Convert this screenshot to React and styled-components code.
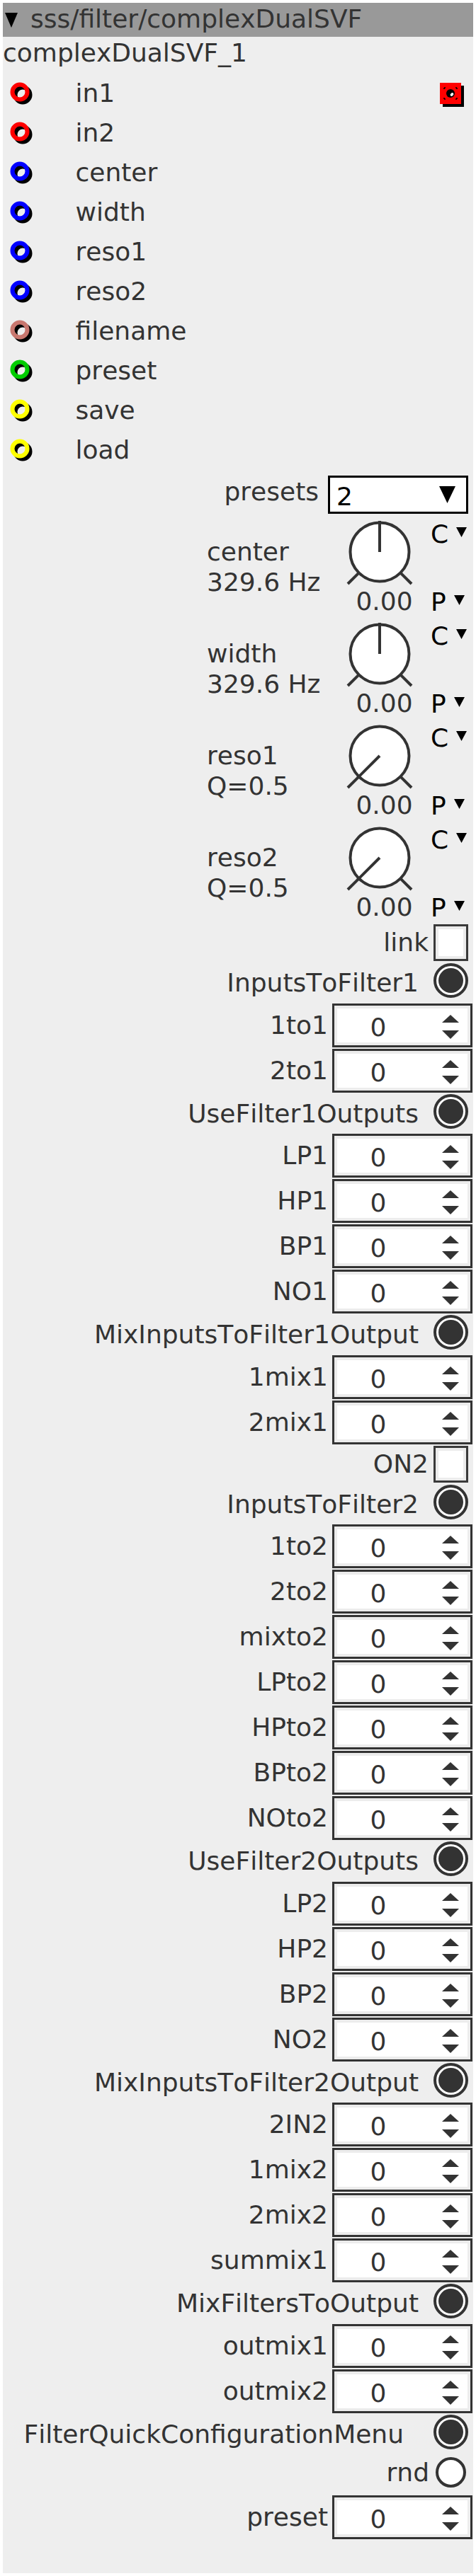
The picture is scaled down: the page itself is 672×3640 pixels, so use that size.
import React from "react";
import styled, { createGlobalStyle } from "styled-components";

const Global = createGlobalStyle`
  html, body { padding: 0; background: #ffffff; }
  body { margin: 4px; font-family: "DejaVu Sans", "Liberation Sans", sans-serif; }
  * { box-sizing: border-box; }
`;

const Panel = styled.div`
  background: #eeeeee;
  min-height: 3632px;
  color: #333333;
  font-size: 36px;
  font-family: "DejaVu Sans", "Liberation Sans", sans-serif;
  font-kerning: none;
  font-feature-settings: "kern" 0;
`;

const Header = styled.div`
  height: 48px;
  background: #999999;
  display: flex;
  align-items: flex-start;
  padding-left: 3px;
`;

const HeaderArrow = styled.svg`
  margin-top: 14px;
  flex: none;
`;

const HeaderTitle = styled.div`
  margin-left: 18px;
  line-height: 46px;
  color: #333333;
  white-space: nowrap;
`;

const TitleRow = styled.div`
  height: 52px;
  line-height: 46px;
  white-space: nowrap;
`;

const InletRow = styled.div`
  height: 56px;
  display: flex;
  align-items: flex-start;
  padding-left: 9.5px;
  padding-right: 13px;
`;

const InletIcon = styled.svg`
  margin-top: 12px;
  flex: none;
`;

const InletLabel = styled.div`
  margin-left: 61px;
  line-height: 56px;
  white-space: nowrap;
`;

const OutletBox = styled.svg`
  margin-left: auto;
  margin-top: 13px;
  flex: none;
`;

const PresetsRow = styled.div`
  height: 66px;
  display: flex;
  justify-content: flex-end;
  align-items: flex-start;
  padding-right: 7px;
`;

const PresetsLabel = styled.div`
  margin-top: 4px;
  margin-right: 13px;
  line-height: 54px;
`;

const DropBox = styled.div`
  margin-top: 8px;
  width: 198px;
  height: 54px;
  border: 3px solid #000000;
  background: #ffffff;
  display: flex;
  align-items: center;
  padding-left: 9px;
  padding-right: 15px;
`;

const DropText = styled.div`
  align-self: flex-start;
  margin-top: 6px;
  line-height: 41px;
  color: #000000;
  flex: 1;
`;

const KnobBlock = styled.div`
  height: 144px;
  display: flex;
  justify-content: flex-end;
`;

const KnobLabel = styled.div`
  width: 194px;
  padding-top: 28px;
  line-height: 43px;
  white-space: nowrap;
`;

const KnobCol = styled.div`
  width: 100px;
  display: flex;
  flex-direction: column;
`;

const KnobValue = styled.div`
  line-height: 40px;
  text-align: center;
  padding-left: 13px;
  white-space: nowrap;
`;

const SideCol = styled.div`
  width: 82px;
  height: 144px;
  padding: 4.5px 0 3.5px 22px;
  display: flex;
  flex-direction: column;
  justify-content: space-between;
  color: #000000;
`;

const SideItem = styled.div`
  display: flex;
  align-items: flex-start;
  line-height: 40px;
`;

const SmallTri = styled.svg`
  margin-left: 11px;
  margin-top: 10px;
  flex: none;
`;

const Row = styled.div`
  height: ${(p) => p.$h}px;
  display: flex;
  justify-content: flex-end;
  align-items: flex-start;
  padding-right: ${(p) => p.$pr}px;
`;

const Label = styled.div`
  white-space: nowrap;
  line-height: ${(p) => p.$lh}px;
  padding-top: ${(p) => p.$pt || 0}px;
  margin-top: ${(p) => p.$mt || 0}px;
  margin-right: ${(p) => p.$mr}px;
`;

const SpinBox = styled.div`
  width: 198px;
  height: 62px;
  border: 3px solid #333333;
  background: #ffffff;
  box-shadow: inset 0 0 0 4px #ececec;
  display: flex;
  align-items: flex-start;
`;

const SpinValue = styled.div`
  width: 124px;
  text-align: center;
  line-height: 50px;
  padding-top: 6px;
  color: #333333;
`;

const SpinArrows = styled.svg`
  margin-left: 28px;
  margin-top: 13px;
  flex: none;
`;

const RadioOuter = styled.div`
  width: 49px;
  height: 49px;
  border-radius: 50%;
  border: 4px solid #333333;
  background: #ffffff;
  display: flex;
  align-items: center;
  justify-content: center;
  flex: none;
`;

const RadioDot = styled.div`
  width: 35px;
  height: 35px;
  border-radius: 50%;
  background: #333333;
`;

const ToggleCircle = styled.div`
  width: 43px;
  height: 43px;
  border-radius: 50%;
  border: 4px solid #333333;
  background: #ffffff;
  margin-top: 3.5px;
  flex: none;
`;

const CheckBox = styled.div`
  width: 49px;
  height: 52px;
  border: 3px solid #3a3a3a;
  background: #ffffff;
  box-shadow: inset 0 0 0 4px #ececec;
  flex: none;
`;

const inlets = [
  { name: "in1", color: "#ff0000", outlet: true },
  { name: "in2", color: "#ff0000" },
  { name: "center", color: "#0000ff" },
  { name: "width", color: "#0000ff" },
  { name: "reso1", color: "#0000ff" },
  { name: "reso2", color: "#0000ff" },
  { name: "filename", color: "#c8776f" },
  { name: "preset", color: "#00cc00" },
  { name: "save", color: "#ffff00" },
  { name: "load", color: "#ffff00" },
];

const knobs = [
  { name: "center", value: "329.6 Hz", angle: 0 },
  { name: "width", value: "329.6 Hz", angle: 0 },
  { name: "reso1", value: "Q=0.5", angle: -135 },
  { name: "reso2", value: "Q=0.5", angle: -135 },
];

const S = (label) => ({ t: "spin", label });
const R = (label, gap) => ({ t: "radio", label, gap });

const controls = [
  { t: "check", label: "link" },
  R("InputsToFilter1"),
  S("1to1"),
  S("2to1"),
  R("UseFilter1Outputs"),
  S("LP1"),
  S("HP1"),
  S("BP1"),
  S("NO1"),
  R("MixInputsToFilter1Output"),
  S("1mix1"),
  S("2mix1"),
  { t: "check", label: "ON2" },
  R("InputsToFilter2"),
  S("1to2"),
  S("2to2"),
  S("mixto2"),
  S("LPto2"),
  S("HPto2"),
  S("BPto2"),
  S("NOto2"),
  R("UseFilter2Outputs"),
  S("LP2"),
  S("HP2"),
  S("BP2"),
  S("NO2"),
  R("MixInputsToFilter2Output"),
  S("2IN2"),
  S("1mix2"),
  S("2mix2"),
  S("summix1"),
  R("MixFiltersToOutput"),
  S("outmix1"),
  S("outmix2"),
  R("FilterQuickConfigurationMenu", 42),
  { t: "toggle", label: "rnd" },
  S("preset"),
];

function InletRing({ color }) {
  return (
    <InletIcon width="32" height="32" viewBox="0 0 32 32">
      <circle cx="18" cy="18" r="10.5" fill="none" stroke="#000" strokeWidth="6" />
      <circle cx="14" cy="14" r="10.5" fill="none" stroke={color} strokeWidth="6" />
    </InletIcon>
  );
}

function Outlet() {
  return (
    <OutletBox width="34" height="34" viewBox="0 0 34 34">
      <rect x="4" y="4" width="30" height="30" fill="#000" />
      <rect x="0" y="0" width="30" height="30" fill="#ff0000" />
      <path d="M6 7h2M6 7v2M22 7h2M24 7v2M6 23h2M6 21v2M22 23h2M24 21v2" stroke="#000" strokeWidth="1.5" fill="none" />
      <circle cx="15" cy="15" r="6" fill="#000" />
      <ellipse cx="17" cy="16.5" rx="2.6" ry="2" fill="#fff" transform="rotate(-40 17 16.5)" />
    </OutletBox>
  );
}

function Knob({ angle }) {
  const rad = (angle * Math.PI) / 180;
  const x2 = 50 + 44 * Math.sin(rad);
  const y2 = 50 - 44 * Math.cos(rad);
  return (
    <svg width="100" height="100" viewBox="0 0 100 100">
      <line x1="20.7" y1="79.3" x2="5" y2="95" stroke="#333" strokeWidth="4" />
      <line x1="79.3" y1="79.3" x2="95" y2="95" stroke="#333" strokeWidth="4" />
      <circle cx="50" cy="50" r="41.5" fill="#fff" stroke="#333" strokeWidth="4" />
      <line x1="50" y1="50" x2={x2} y2={y2} stroke="#333" strokeWidth="4" />
    </svg>
  );
}

function Tri() {
  return (
    <SmallTri width="15" height="14" viewBox="0 0 15 14">
      <polygon points="0,0 15,0 7.5,14" fill="#000" />
    </SmallTri>
  );
}

function Control({ c }) {
  if (c.t === "spin") {
    return (
      <Row $h={64} $pr={1}>
        <Label $lh={62} $mr={6}>{c.label}</Label>
        <SpinBox>
          <SpinValue>0</SpinValue>
          <SpinArrows width="24" height="34" viewBox="0 0 24 34">
            <polygon points="12,0 24,11 0,11" fill="#333" />
            <polygon points="0,22 24,22 12,34" fill="#333" />
          </SpinArrows>
        </SpinBox>
      </Row>
    );
  }
  if (c.t === "radio") {
    return (
      <Row $h={56.5} $pr={7}>
        <Label $lh={50} $pt={3} $mr={c.gap || 21}>{c.label}</Label>
        <RadioOuter>
          <RadioDot />
        </RadioOuter>
      </Row>
    );
  }
  if (c.t === "check") {
    return (
      <Row $h={55} $pr={7}>
        <Label $lh={52} $mr={7}>{c.label}</Label>
        <CheckBox />
      </Row>
    );
  }
  return (
    <Row $h={57.5} $pr={10}>
      <Label $lh={43} $mt={3.5} $mr={9}>{c.label}</Label>
      <ToggleCircle />
    </Row>
  );
}

export default function App() {
  return (
    <>
      <Global />
      <Panel>
        <Header>
          <HeaderArrow width="18" height="21" viewBox="0 0 18 21">
            <polygon points="0,0 18,0 9,21" fill="#000" />
          </HeaderArrow>
          <HeaderTitle>sss/filter/complexDualSVF</HeaderTitle>
        </Header>
        <TitleRow>complexDualSVF_1</TitleRow>
        {inlets.map((i) => (
          <InletRow key={i.name}>
            <InletRing color={i.color} />
            <InletLabel>{i.name}</InletLabel>
            {i.outlet && <Outlet />}
          </InletRow>
        ))}
        <PresetsRow>
          <PresetsLabel>presets</PresetsLabel>
          <DropBox>
            <DropText>2</DropText>
            <svg width="23" height="24" viewBox="0 0 23 24">
              <polygon points="0,0 23,0 11.5,24" fill="#000" />
            </svg>
          </DropBox>
        </PresetsRow>
        {knobs.map((k) => (
          <KnobBlock key={k.name}>
            <KnobLabel>
              {k.name}
              <br />
              {k.value}
            </KnobLabel>
            <KnobCol>
              <Knob angle={k.angle} />
              <KnobValue>0.00</KnobValue>
            </KnobCol>
            <SideCol>
              <SideItem>
                C<Tri />
              </SideItem>
              <SideItem>
                P<Tri />
              </SideItem>
            </SideCol>
          </KnobBlock>
        ))}
        {controls.map((c, idx) => (
          <Control key={idx} c={c} />
        ))}
      </Panel>
    </>
  );
}
